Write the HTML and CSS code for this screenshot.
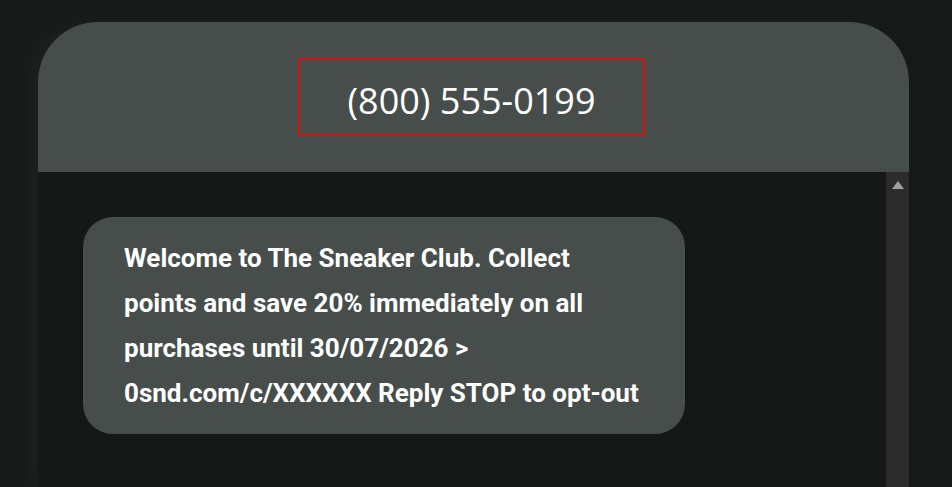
FILE: index.html
```html
<!DOCTYPE html>
<html lang="en">
<head>
    <meta charset="UTF-8">
    <meta name="viewport" content="width=device-width, initial-scale=1.0">
    <title>SMS Preview</title>
    <link rel="stylesheet" href="styles.css">
</head>
<body>
    <div class="phone">
        <div class="phone-header">
            <div class="sender">(800) 555-0199</div>
        </div>
        <div class="screen">
            <div class="messages">
                <div class="bubble">
                    Welcome to The Sneaker Club. Collect<br>
                    points and save 20% immediately on all<br>
                    purchases until 30/07/2026 &gt;<br>
                    0snd.com/c/XXXXXX Reply STOP to opt-out
                </div>
            </div>
            <div class="scrollbar">
                <span class="scroll-up"></span>
            </div>
        </div>
    </div>
</body>
</html>
```

FILE: styles.css
```css
body {
    margin: 0;
    background: #161a19;
    font-family: 'Roboto', Arial, sans-serif;
    overflow: hidden;
}
.phone {
    width: 871px;
    margin: 22px 0 0 38px;
    border-radius: 60px 60px 0 0;
    overflow: hidden;
    background: #141817;
    box-shadow: -12px 0 16px rgba(40, 44, 43, 0.35);
}
.phone-header {
    height: 150px;
    background: #464d4b;
    display: flex;
    align-items: center;
    justify-content: center;
}
.sender {
    width: 343px;
    height: 68px;
    margin-right: 4px;
    padding-top: 6px;
    border: 2px solid #d40f0f;
    display: flex;
    align-items: center;
    justify-content: center;
    font-family: 'Open Sans', Arial, sans-serif;
    font-size: 36px;
    color: white;
}
.screen {
    display: flex;
    height: 315px;
}
.messages {
    flex: 1;
    padding: 45px 0 0 45px;
}
.bubble {
    width: 520px;
    background: #464d4b;
    border-radius: 30px;
    padding: 19px 41px 18px 41px;
    color: white;
    font-size: 26px;
    font-weight: 700;
    line-height: 45px;
    white-space: nowrap;
}
.scrollbar {
    width: 23px;
    background: #2c2c2c;
    display: flex;
    justify-content: center;
}
.scroll-up {
    width: 0;
    height: 0;
    margin-top: 9px;
    border-left: 6px solid transparent;
    border-right: 6px solid transparent;
    border-bottom: 8px solid #a0a0a0;
}
```
